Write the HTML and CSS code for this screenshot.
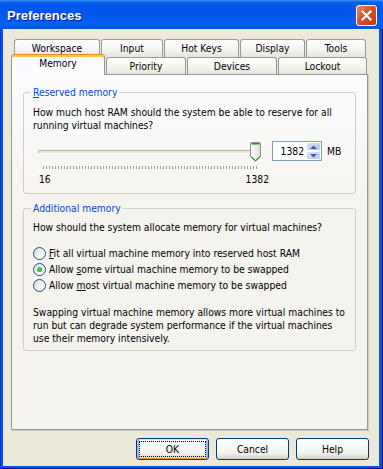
FILE: index.html
```html
<!DOCTYPE html>
<html lang="en">
<head>
  <meta charset="UTF-8">
  <title>Preferences</title>
  <link rel="stylesheet" href="styles.css">
</head>
<body>

  <div class="window">
    <div class="titlebar">
      <span class="title">Preferences</span>
      <span class="close">
        <svg width="11" height="11" viewBox="0 0 11 11"><path d="M1.5 1.5 L9.5 9.5 M9.5 1.5 L1.5 9.5" stroke="#fff" stroke-width="2.2" stroke-linecap="square"/></svg>
      </span>
    </div>

    <div class="client">
      <div class="tabs tabs-back">
        <div class="tab t-workspace">Workspace</div>
        <div class="tab t-input">Input</div>
        <div class="tab t-hotkeys">Hot Keys</div>
        <div class="tab t-display">Display</div>
        <div class="tab t-tools">Tools</div>
      </div>
      <div class="tabs tabs-front">
        <div class="tab active t-memory">Memory</div>
        <div class="tab t-priority">Priority</div>
        <div class="tab t-devices">Devices</div>
        <div class="tab t-lockout">Lockout</div>
      </div>

      <div class="panel">
        <fieldset class="group">
          <legend><u>R</u>eserved memory</legend>
          <p>How much host RAM should the system be able to reserve for all<br>running virtual machines?</p>

          <div class="slider-row">
            <div class="slider">
              <div class="track-area">
                <div class="track"></div>
                <svg class="thumb" width="11" height="20" viewBox="0 0 11 20">
                  <defs>
                    <linearGradient id="tg" x1="0" y1="0" x2="1" y2="0">
                      <stop offset="0" stop-color="#ffffff"/>
                      <stop offset="1" stop-color="#dedcd2"/>
                    </linearGradient>
                  </defs>
                  <path d="M0.5 2 Q0.5 0.5 2 0.5 H9 Q10.5 0.5 10.5 2 V14.5 L5.5 19.5 L0.5 14.5 Z" fill="url(#tg)" stroke="#8c8b83"/>
                  <path d="M1.5 1.5 H9.5" stroke="#21a121" stroke-width="1"/>
                  <path d="M1.5 2.5 H9.5" stroke="#6ccd6c" stroke-width="1"/>
                  <path d="M1.5 14.5 L5.5 18.5 L9.5 14.5" fill="none" stroke="#21a121" stroke-width="1"/>
                </svg>
              </div>
              <div class="ticks"></div>
              <div class="scale">
                <span>16</span>
                <span>1382</span>
              </div>
            </div>
            <div class="spin">
              <div class="spin-value">1382</div>
              <div class="spin-buttons">
                <div class="spin-btn">
                  <svg width="7" height="4" viewBox="0 0 7 4"><path d="M0 4 L3.5 0.5 L7 4 Z" fill="#4d6185"/></svg>
                </div>
                <div class="spin-btn">
                  <svg width="7" height="4" viewBox="0 0 7 4"><path d="M0 0 L3.5 3.5 L7 0 Z" fill="#4d6185"/></svg>
                </div>
              </div>
            </div>
            <span class="unit">MB</span>
          </div>
        </fieldset>

        <fieldset class="group group-additional">
          <legend>Additional memory</legend>
          <p>How should the system allocate memory for virtual machines?</p>

          <div class="radios">
            <div class="radio"><span class="radio-dot"></span><span><u>F</u>it all virtual machine memory into reserved host RAM</span></div>
            <div class="radio"><span class="radio-dot checked"></span><span>Allow <u>s</u>ome virtual machine memory to be swapped</span></div>
            <div class="radio"><span class="radio-dot"></span><span>Allow <u>m</u>ost virtual machine memory to be swapped</span></div>
          </div>

          <p class="note">Swapping virtual machine memory allows more virtual machines to<br>run but can degrade system performance if the virtual machines<br>use their memory intensively.</p>
        </fieldset>
      </div>

      <div class="buttons">
        <button class="default">OK</button>
        <button>Cancel</button>
        <button>Help</button>
      </div>
    </div>
  </div>

</body>
</html>
```

FILE: styles.css
```css
body {
  margin: 0;
  font-family: "DejaVu Sans Condensed", "Liberation Sans", sans-serif;
  font-size: 10.25px;
  line-height: 13px;
  color: #000;
}

p {
  margin: 0;
  white-space: nowrap;
}

.window {
  width: 383px;
  height: 469px;
  display: flex;
  flex-direction: column;
  background: #0855dd;
  box-shadow: inset 1px 0 #0831d9, inset -1px 0 #00138c, inset 0 -1px #00138c;
}

/* title bar */

.titlebar {
  height: 29px;
  box-sizing: border-box;
  padding: 2px 6px 0 7px;
  display: flex;
  align-items: center;
  justify-content: space-between;
  background: linear-gradient(#3d95ff 0, #0a61e6 2px, #0058ee 5px, #0055ea 45%, #0360f3 80%, #0654e0 100%);
}

.title {
  color: #fff;
  font-family: "Liberation Sans", sans-serif;
  font-weight: bold;
  font-size: 13px;
  text-shadow: 1px 1px #0a1883;
}

.close {
  width: 21px;
  height: 21px;
  box-sizing: border-box;
  border: 1px solid #fff;
  border-radius: 3px;
  background: linear-gradient(135deg, #e6886a, #d6532e 45%, #c2380f);
  display: flex;
  align-items: center;
  justify-content: center;
}

.close svg {
  display: block;
}

.client {
  flex: 1;
  margin: 0 4px 3px 3px;
  padding-top: 10px;
  background: #ece9d8;
  display: flex;
  flex-direction: column;
}

/* tabs */

.tabs {
  display: flex;
  gap: 1px;
}

.tabs-back {
  height: 18px;
  padding-left: 11px;
}

.tabs-front {
  height: 17px;
  padding-left: 8px;
  align-items: flex-end;
}

.tab {
  box-sizing: border-box;
  height: 18px;
  border: 1px solid #919b9c;
  border-bottom: none;
  border-radius: 3px 3px 0 0;
  background: linear-gradient(#fefefe, #f4f3ee 60%, #e6e4dc);
  text-align: center;
  line-height: 16px;
}

.tabs-front .tab {
  height: 17px;
}

.tabs-front .tab.active {
  height: 21px;
  margin-bottom: -1px;
  position: relative;
  z-index: 1;
  padding-top: 2px;
  line-height: 13px;
  background: #fcfcfe;
  border-top-color: #e68b2c;
  box-shadow: inset 0 2px #ffc73c;
}

.t-workspace { width: 86px; }
.t-input { width: 62px; }
.t-hotkeys { width: 75px; }
.t-display { width: 65px; }
.t-tools { width: 60px; }
.t-memory { width: 94px; }
.t-priority { width: 80px; }
.t-devices { width: 90px; }
.t-lockout { width: 89px; }

.panel {
  width: 357px;
  height: 356px;
  box-sizing: border-box;
  margin-left: 8px;
  padding: 0 11px;
  border: 1px solid #919b9c;
  background: linear-gradient(#fcfcfe, #f4f3ee 40%, #f4f3ee);
  box-shadow: 1px 1px 0 #c9c7ba;
}

/* group boxes */

.group {
  width: 333px;
  box-sizing: border-box;
  min-width: 0;
  margin: 11px 0 0;
  padding: 7px 9px 7px 9px;
  border: 1px solid #d0d0bf;
  border-radius: 3px;
}

.group legend {
  color: #0046d5;
  padding: 0 2px;
  margin-left: -2px;
}

.group-additional {
  margin-top: 8px;
  padding: 6px 9px 5px 9px;
}

.slider-row {
  display: flex;
  align-items: flex-start;
  margin-top: 9px;
}

.slider {
  width: 228px;
  margin-left: 5px;
}

.track-area {
  position: relative;
  height: 11px;
  padding-top: 9px;
}

.track {
  width: 218px;
  height: 4px;
  box-sizing: border-box;
  border: 1px solid #b5b2a4;
  border-right-color: #fff;
  border-bottom-color: #fff;
  border-radius: 2px;
  background: #ece9d8;
}

.thumb {
  position: absolute;
  left: 212px;
  top: 1px;
  display: block;
}

.ticks {
  margin: 5px 0 0 5px;
  width: 214px;
  height: 3px;
  background: repeating-linear-gradient(90deg, #a19f94 0 1px, transparent 1px 3px);
}

.scale {
  width: 230px;
  margin: 4px 0 0 1px;
  display: flex;
  justify-content: space-between;
}

.spin {
  margin-left: 6px;
  width: 50px;
  height: 20px;
  box-sizing: border-box;
  border: 1px solid #7f9db9;
  background: #fff;
  display: flex;
}

.spin-value {
  flex: 1;
  text-align: right;
  padding-right: 2px;
  line-height: 18px;
}

.spin-buttons {
  width: 15px;
  display: flex;
  flex-direction: column;
}

.spin-btn {
  flex: 1;
  box-sizing: border-box;
  border: 1px solid #fff;
  border-radius: 2px;
  background: linear-gradient(135deg, #d3e0fd, #b6cbf9);
  display: flex;
  align-items: center;
  justify-content: center;
}

.spin-btn svg {
  display: block;
}

.unit {
  margin-left: 5px;
  line-height: 20px;
}

.radios {
  margin-top: 11px;
}

.radio {
  display: flex;
  align-items: center;
  gap: 3px;
  height: 16px;
  white-space: nowrap;
}

.radio-dot {
  width: 13px;
  height: 13px;
  box-sizing: border-box;
  border: 1px solid #1c5180;
  border-radius: 50%;
  background: linear-gradient(135deg, #dcdcd5, #ffffff 80%);
  display: flex;
  align-items: center;
  justify-content: center;
}

.radio-dot.checked::after {
  content: "";
  width: 5px;
  height: 5px;
  border-radius: 50%;
  background: radial-gradient(circle at 35% 35%, #5ad35a, #21a121);
}

.note {
  margin-top: 13px;
}

/* buttons */

.buttons {
  display: flex;
  justify-content: flex-end;
  gap: 7px;
  margin-top: 8px;
  padding-right: 10px;
}

button {
  width: 73px;
  height: 22px;
  padding: 0;
  font-family: inherit;
  font-size: inherit;
  color: #000;
  border: 1px solid #003c74;
  border-radius: 3px;
  background: linear-gradient(#ffffff, #f3f3ef 70%, #d6d0c5);
}

button.default {
  box-shadow: inset 0 1px #cee7ff, inset 2px 0 #98b8ea, inset -2px 0 #98b8ea, inset 0 -1px #e5973b;
  outline: 1px dotted #000;
  outline-offset: -4px;
}
```
